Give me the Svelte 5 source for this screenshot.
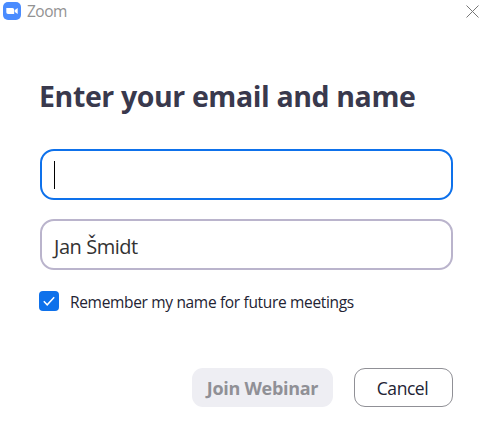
<script>
  let email = "";
  let name = "Jan Šmidt";
  let remember = true;
</script>

<style>
  :global(body) {
    background: #ffffff;
  }

  .dialog {
    box-sizing: border-box;
    height: 444px;
    font-family: "Open Sans", "Noto Sans", sans-serif;
    color: #232333;
  }

  .titlebar {
    display: flex;
    align-items: center;
    height: 22px;
    padding: 0 12px 0 3px;
  }

  .logo {
    width: 18px;
    height: 18px;
  }

  .app-name {
    flex: 1;
    margin-left: 6px;
    font-size: 15.5px;
    line-height: 22px;
    letter-spacing: -0.5px;
    color: #929292;
  }

  .close {
    display: flex;
    padding: 0;
    border: none;
    background: none;
  }

  .content {
    padding: 51px 38px 0 40px;
  }

  h1 {
    margin: 0 0 0 -1px;
    font-size: 28.5px;
    line-height: 46px;
    font-weight: 700;
    letter-spacing: -0.39px;
    white-space: nowrap;
    color: #39394d;
  }

  .field {
    box-sizing: border-box;
    display: flex;
    align-items: center;
    height: 51px;
    margin-top: 30px;
    padding: 0 12px;
    border: 2px solid #bab4cc;
    border-radius: 14px;
    font-size: 20px;
    letter-spacing: -0.45px;
    color: #333333;
  }

  .field.focused {
    border-color: #0e71eb;
  }

  .field + .field {
    margin-top: 19px;
    padding-top: 3px;
  }

  .caret {
    width: 1px;
    height: 28px;
    background: #000000;
  }

  .remember {
    display: flex;
    align-items: center;
    height: 20px;
    margin: 21px 0 0 -1px;
    font-size: 15.5px;
    letter-spacing: -0.33px;
    white-space: nowrap;
  }

  .remember .label {
    padding-top: 2px;
  }

  .box {
    display: flex;
    width: 20px;
    height: 20px;
    margin-right: 11px;
    border-radius: 4px;
    background: #0e71eb;
  }

  .actions {
    display: flex;
    justify-content: flex-end;
    gap: 21px;
    margin-top: 57px;
  }

  .actions button {
    box-sizing: border-box;
    width: 99px;
    height: 39px;
    padding: 0 2px 0 0;
    border: 1px solid #909096;
    border-radius: 11px;
    background: #ffffff;
    font-family: inherit;
    font-size: 17.5px;
    letter-spacing: -0.45px;
    white-space: nowrap;
    color: #232333;
  }

  .actions .join {
    width: 141px;
    padding: 0;
    border: none;
    background: #eeeef3;
    font-size: 18px;
    font-weight: 700;
    letter-spacing: -0.28px;
    color: #909096;
  }
</style>

<div class="dialog">
  <div class="titlebar">
    <svg class="logo" viewBox="0 0 18 18">
      <rect width="18" height="18" rx="5" fill="#4a8cff" />
      <path
        d="M3.3 6h6.2a1.7 1.7 0 0 1 1.7 1.7V12H5a1.7 1.7 0 0 1-1.7-1.7z
        M11.8 8l2.9-2v6l-2.9-2z"
        fill="#ffffff" />
    </svg>
    <span class="app-name">Zoom</span>
    <button class="close" aria-label="Close">
      <svg width="13" height="13" viewBox="0 0 13 13">
        <path d="M.5.5l12 12M12.5.5l-12 12" stroke="#777777" />
      </svg>
    </button>
  </div>

  <div class="content">
    <h1><span>Enter your email and name</span></h1>
    <div class="field focused">{email}<span class="caret"></span></div>
    <div class="field"><span>{name}</span></div>

    <div class="remember">
      <span class="box">
        {#if remember}
          <svg width="20" height="20" viewBox="0 0 20 20">
            <path
              d="M4.8 10.2l3.4 3.6 7-7.6"
              fill="none"
              stroke="#ffffff"
              stroke-width="1.5" />
          </svg>
        {/if}
      </span>
      <span class="label">Remember my name for future meetings</span>
    </div>

    <div class="actions">
      <button class="join" disabled>Join Webinar</button>
      <button>Cancel</button>
    </div>
  </div>
</div>
